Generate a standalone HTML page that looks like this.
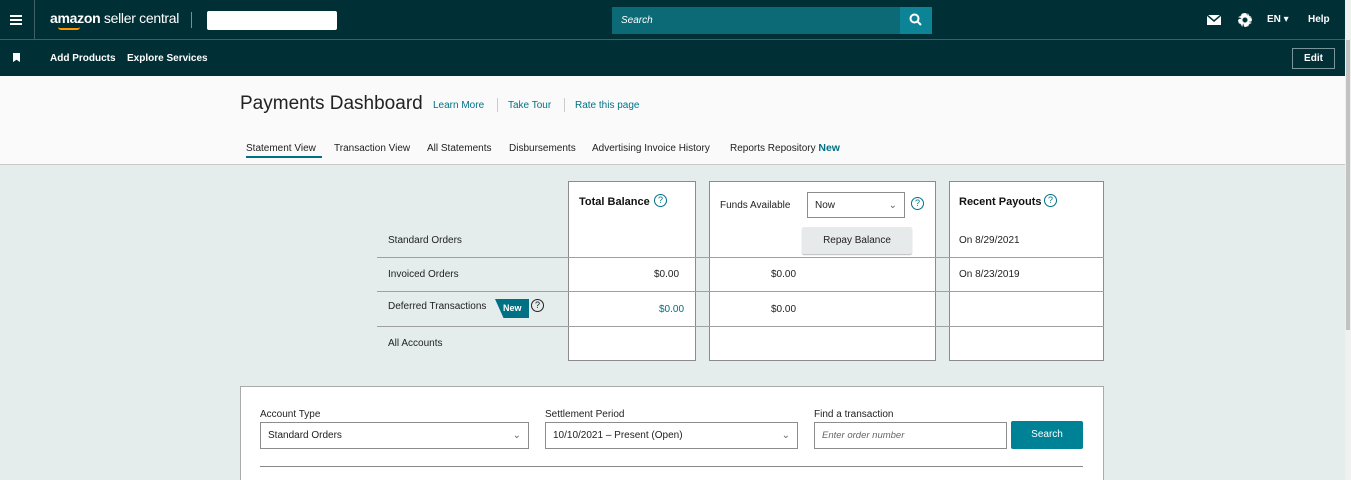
<!DOCTYPE html><html><head><style>
*{box-sizing:border-box;margin:0;padding:0}
html,body{width:1351px;height:480px;overflow:hidden}
body{font-family:"Liberation Sans","DejaVu Sans",sans-serif;background:#e4ecec;position:relative;color:#111}
.a{position:absolute}
.top{left:0;top:0;width:1345px;height:40px;background:#002f36;border-bottom:1px solid #3f6166}
.nav2{left:0;top:40px;width:1345px;height:36px;background:#002f36}
.w{color:#fff;font-size:10px;font-weight:bold}
.hdr{left:0;top:76px;width:1345px;height:89px;background:#fafafa;border-bottom:1px solid #c8c8c8}
.cell{background:#fff;border:1px solid #8c8c8c}
.t{font-size:10px;color:#222}
.line{height:1px;background:#a0a0a0}
.sb{left:1345px;top:0;width:6px;height:480px;background:#f0f0f0}
.link{color:#007185;font-size:10px}
.sel{background:#fff;border:1px solid #8c8c8c;font-size:10px;color:#222;padding:7px 7px;height:27px}
.q{width:13px;height:13px;border:1px solid #007185;border-radius:50%;font-size:9px;color:#007185;text-align:center;line-height:11px}
</style></head><body>
<div class="a top"></div>
<div class="a" style="left:10px;top:15px;width:12px;height:2px;background:#fff;box-shadow:0 4px 0 #fff,0 8px 0 #fff"></div>
<div class="a" style="left:34px;top:0;width:1px;height:40px;background:#3f6166"></div>
<div class="a" style="left:50px;top:10px;color:#fff;font-size:14px;letter-spacing:-0.3px"><b>amazon</b> seller central</div>
<div class="a" style="left:58px;top:27px;width:22px;height:3px;border-bottom:2px solid #f90;border-radius:0 0 10px 10px"></div>
<div class="a" style="left:191px;top:12px;width:1px;height:16px;background:#889"></div>
<div class="a" style="left:207px;top:11px;width:130px;height:19px;background:#fff;border-radius:2px"></div>
<div class="a" style="left:612px;top:7px;width:289px;height:27px;background:#0b6a76;color:#fff;font-size:10px;font-style:italic;padding:8px 9px">Search</div>
<div class="a" style="left:900px;top:7px;width:32px;height:27px;background:#0d8495"></div>
<svg class="a" style="left:909px;top:13px" width="14" height="14"><circle cx="5.5" cy="5.5" r="4" stroke="#fff" stroke-width="2" fill="none"/><path d="M8.5 8.5L12 12" stroke="#fff" stroke-width="2"/></svg>
<div class="a" style="left:1207px;top:15px;width:14px;height:10px;background:#fff"></div>
<svg class="a" style="left:1207px;top:15px" width="14" height="10"><path d="M0 0L7 6L14 0" stroke="#002f36" stroke-width="1.5" fill="none"/></svg>
<div class="a" style="left:1238px;top:13px;width:14px;height:14px;border-radius:50%;border:4px dotted #fff;background:radial-gradient(#002f36 2px,#fff 3px)"></div>
<div class="a w" style="left:1267px;top:14px">EN ▾</div>
<div class="a w" style="left:1308px;top:14px">Help</div>
<div class="a nav2"></div>
<div class="a" style="left:13px;top:53px;width:7px;height:9px;background:#fff;clip-path:polygon(0 0,100% 0,100% 100%,50% 75%,0 100%)"></div>
<div class="a w" style="left:50px;top:53px">Add Products</div>
<div class="a w" style="left:127px;top:53px">Explore Services</div>
<div class="a w" style="left:1292px;top:48px;width:43px;height:21px;border:1px solid #7a9599;text-align:center;padding-top:4px">Edit</div>
<div class="a hdr"></div>
<div class="a" style="left:240px;top:93px;font-size:19px;color:#222">Payments Dashboard</div>
<div class="a link" style="left:433px;top:100px">Learn More</div>
<div class="a" style="left:497px;top:98px;width:1px;height:14px;background:#ccc"></div>
<div class="a link" style="left:508px;top:100px">Take Tour</div>
<div class="a" style="left:564px;top:98px;width:1px;height:14px;background:#ccc"></div>
<div class="a link" style="left:575px;top:100px">Rate this page</div>
<div class="a t" style="left:246px;top:143px">Statement View</div>
<div class="a" style="left:246px;top:156px;width:76px;height:2px;background:#007185"></div>
<div class="a t" style="left:334px;top:143px">Transaction View</div>
<div class="a t" style="left:427px;top:143px">All Statements</div>
<div class="a t" style="left:509px;top:143px">Disbursements</div>
<div class="a t" style="left:592px;top:143px">Advertising Invoice History</div>
<div class="a t" style="left:730px;top:142px">Reports Repository <b style="color:#007185;font-size:10.5px">New</b></div>

<div class="a cell" style="left:568px;top:181px;width:128px;height:180px"></div>
<div class="a cell" style="left:709px;top:181px;width:227px;height:180px"></div>
<div class="a cell" style="left:949px;top:181px;width:155px;height:180px"></div>
<div class="a line" style="left:377px;top:257px;width:727px"></div>
<div class="a line" style="left:377px;top:291px;width:727px"></div>
<div class="a line" style="left:377px;top:326px;width:727px"></div>
<div class="a" style="left:579px;top:196px;font-size:11px;font-weight:bold">Total Balance</div>
<div class="a q" style="left:654px;top:194px">?</div>
<div class="a t" style="left:720px;top:200px">Funds Available</div>
<div class="a sel" style="left:807px;top:192px;width:98px;height:26px">Now<span style="float:right;color:#666">⌄</span></div>
<div class="a q" style="left:911px;top:197px">?</div>
<div class="a t" style="left:802px;top:227px;width:110px;height:27px;background:#e6eaea;border-radius:2px;text-align:center;padding-top:8px;box-shadow:0 1px 1px #bbb">Repay Balance</div>
<div class="a" style="left:959px;top:196px;font-size:11px;font-weight:bold">Recent Payouts</div>
<div class="a q" style="left:1044px;top:194px">?</div>
<div class="a t" style="left:388px;top:235px">Standard Orders</div>
<div class="a t" style="left:959px;top:235px">On 8/29/2021</div>
<div class="a t" style="left:388px;top:269px">Invoiced Orders</div>
<div class="a t" style="left:654px;top:269px">$0.00</div>
<div class="a t" style="left:771px;top:269px">$0.00</div>
<div class="a t" style="left:959px;top:269px">On 8/23/2019</div>
<div class="a t" style="left:388px;top:301px">Deferred Transactions</div>
<div class="a" style="left:495px;top:299px;width:34px;height:19px;background:#007185;clip-path:polygon(0 0,100% 0,100% 100%,25% 100%);color:#fff;font-size:9px;font-weight:bold;padding:4px 0 0 8px">New</div>
<div class="a" style="left:531px;top:299px;width:13px;height:13px;border:1px solid #222;border-radius:50%;font-size:9px;text-align:center;line-height:11px">?</div>
<div class="a t" style="left:659px;top:304px;color:#007185">$0.00</div>
<div class="a t" style="left:771px;top:304px">$0.00</div>
<div class="a t" style="left:388px;top:338px">All Accounts</div>

<div class="a" style="left:240px;top:386px;width:864px;height:94px;background:#fff;border:1px solid #aaa;border-bottom:none"></div>
<div class="a t" style="left:260px;top:409px">Account Type</div>
<div class="a sel" style="left:260px;top:422px;width:269px">Standard Orders<span style="float:right;color:#666">⌄</span></div>
<div class="a t" style="left:545px;top:409px">Settlement Period</div>
<div class="a sel" style="left:545px;top:422px;width:253px">10/10/2021 – Present (Open)<span style="float:right;color:#666">⌄</span></div>
<div class="a t" style="left:814px;top:409px">Find a transaction</div>
<div class="a sel" style="left:814px;top:422px;width:193px;color:#666;font-style:italic;font-size:9.5px">Enter order number</div>
<div class="a" style="left:1011px;top:421px;width:72px;height:28px;background:#008296;color:#fff;font-size:10px;text-align:center;padding-top:8px;border-radius:2px">Search</div>
<div class="a line" style="left:260px;top:466px;width:823px;background:#888"></div>
<div class="a sb"></div>
<div class="a" style="left:1346px;top:40px;width:4px;height:290px;background:#c2c2c2"></div>
</body></html>
